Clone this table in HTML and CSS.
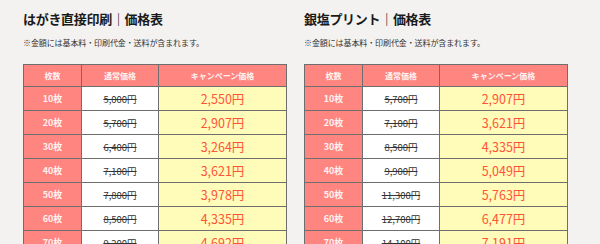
FILE: index.html
```html
<!DOCTYPE html>
<html lang="ja">
<head>
<meta charset="utf-8">
<link rel="stylesheet" href="styles.css">
</head>
<body>
<div class="page">
  <section class="block">
    <h2 class="title">はがき直接印刷｜価格表</h2>
    <p class="note">※金額には基本料・印刷代金・送料が含まれます。</p>
    <table class="price">
      <colgroup><col class="c1"><col class="c2"><col class="c3"></colgroup>
      <thead><tr><th>枚数</th><th>通常価格</th><th>キャンペーン価格</th></tr></thead>
      <tbody>
        <tr><th>10枚</th><td class="reg"><s>5,000円</s></td><td class="camp">2,550円</td></tr>
        <tr><th>20枚</th><td class="reg"><s>5,700円</s></td><td class="camp">2,907円</td></tr>
        <tr><th>30枚</th><td class="reg"><s>6,400円</s></td><td class="camp">3,264円</td></tr>
        <tr><th>40枚</th><td class="reg"><s>7,100円</s></td><td class="camp">3,621円</td></tr>
        <tr><th>50枚</th><td class="reg"><s>7,800円</s></td><td class="camp">3,978円</td></tr>
        <tr><th>60枚</th><td class="reg"><s>8,500円</s></td><td class="camp">4,335円</td></tr>
        <tr><th>70枚</th><td class="reg"><s>9,200円</s></td><td class="camp">4,692円</td></tr>
      </tbody>
    </table>
  </section>
  <section class="block">
    <h2 class="title">銀塩プリント｜価格表</h2>
    <p class="note">※金額には基本料・印刷代金・送料が含まれます。</p>
    <table class="price">
      <colgroup><col class="c1"><col class="c2"><col class="c3"></colgroup>
      <thead><tr><th>枚数</th><th>通常価格</th><th>キャンペーン価格</th></tr></thead>
      <tbody>
        <tr><th>10枚</th><td class="reg"><s>5,700円</s></td><td class="camp">2,907円</td></tr>
        <tr><th>20枚</th><td class="reg"><s>7,100円</s></td><td class="camp">3,621円</td></tr>
        <tr><th>30枚</th><td class="reg"><s>8,500円</s></td><td class="camp">4,335円</td></tr>
        <tr><th>40枚</th><td class="reg"><s>9,900円</s></td><td class="camp">5,049円</td></tr>
        <tr><th>50枚</th><td class="reg"><s>11,300円</s></td><td class="camp">5,763円</td></tr>
        <tr><th>60枚</th><td class="reg"><s>12,700円</s></td><td class="camp">6,477円</td></tr>
        <tr><th>70枚</th><td class="reg"><s>14,100円</s></td><td class="camp">7,191円</td></tr>
      </tbody>
    </table>
  </section>
</div>
</body>
</html>
```
FILE: styles.css
```css
html, body {
  margin: 0;
  padding: 0;
  background: #f3f2f0;
  overflow: hidden;
}
body {
  font-family: "Noto Sans CJK JP", "Noto Sans", sans-serif;
  color: #222;
}
.page {
  display: flex;
  gap: 18px;
  padding: 9px 0 0 23px;
}
.block {
  width: 263px;
}
.title {
  margin: 0;
  font-size: 13px;
  line-height: 20px;
  font-weight: bold;
  color: #1a1a1a;
  letter-spacing: -0.3px;
}
.note {
  margin: 8px 0 0;
  font-size: 8px;
  line-height: 12px;
  color: #333;
  letter-spacing: -0.1px;
}
.price {
  margin-top: 15px;
  width: 263px;
  border-collapse: collapse;
  table-layout: fixed;
}
.c1 { width: 58px; }
.c2 { width: 77px; }
.c3 { width: 128px; }
.price th, .price td {
  border: 1px solid #6e6e6e;
  padding: 0;
  text-align: center;
  vertical-align: middle;
}
.price thead th {
  height: 21px;
  background: #ff8581;
  color: #fff2f0;
  font-size: 8px;
  font-weight: bold;
}
.price tbody th {
  height: 23px;
  background: #ff8581;
  color: #fff2f0;
  font-size: 9px;
  font-weight: bold;
}
.reg {
  background: #ffffff;
  color: #333;
  font-size: 9.5px;
}
.camp {
  background: #fffbb9;
  color: #ff5436;
  font-size: 12.5px;
}
```
